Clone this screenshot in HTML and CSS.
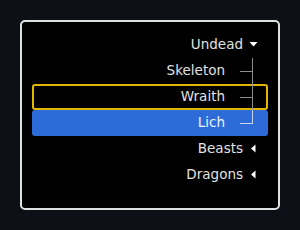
FILE: index.html
```html
<!DOCTYPE html>
<html>
<head>
<meta charset="utf-8">
<link rel="stylesheet" href="styles.css">
</head>
<body>
<div class="panel">
  <div class="tree">
    <div class="row">
      <span class="label">Undead</span>
      <span class="twisty"><svg width="14" height="26" viewBox="0 0 14 26"><polygon points="3.5,10 11.5,10 7.5,14.5" fill="#ffffff"/></svg></span>
    </div>
    <div class="row child">
      <span class="label">Skeleton</span>
      <span class="branch"></span>
    </div>
    <div class="row child focused">
      <span class="label">Wraith</span>
      <span class="branch"></span>
    </div>
    <div class="row child selected last">
      <span class="label">Lich</span>
      <span class="branch"></span>
    </div>
    <div class="row">
      <span class="label">Beasts</span>
      <span class="twisty"><svg width="14" height="26" viewBox="0 0 14 26"><polygon points="5,12.5 9.5,8.5 9.5,16.5" fill="#ffffff"/></svg></span>
    </div>
    <div class="row">
      <span class="label">Dragons</span>
      <span class="twisty"><svg width="14" height="26" viewBox="0 0 14 26"><polygon points="5,12.5 9.5,8.5 9.5,16.5" fill="#ffffff"/></svg></span>
    </div>
  </div>
</div>
</body>
</html>
```
FILE: styles.css
```css
html, body {
  margin: 0;
  padding: 0;
  background: #0d1117;
}

body {
  width: 300px;
  height: 230px;
  padding: 20px;
  box-sizing: border-box;
  font-family: "DejaVu Sans", sans-serif;
  font-size: 13.5px;
}

.panel {
  box-sizing: border-box;
  width: 260px;
  height: 190px;
  border: 2px solid #e0e0e0;
  border-radius: 5px;
  background: #000;
  padding: 10px;
}

.tree {
  display: flex;
  flex-direction: column;
}

.row {
  height: 26px;
  display: flex;
  justify-content: flex-end;
  align-items: center;
  padding-right: 8px;
  border-radius: 3px;
  color: #e2e2e2;
}

.label {
  line-height: 22px;
  margin-bottom: 3px;
}

.twisty {
  width: 14px;
  height: 26px;
  margin-left: 3px;
  display: block;
}

.twisty svg {
  display: block;
}

.branch {
  width: 35px;
  height: 26px;
  background-image: linear-gradient(#8e8e8e, #8e8e8e), linear-gradient(#8e8e8e, #8e8e8e);
  background-repeat: no-repeat;
  background-size: 12px 1px, 1px 100%;
  background-position: 15px 13px, 27px 0;
}

.last .branch {
  background-size: 12px 1px, 1px 14px;
}

.focused {
  box-shadow: inset 0 0 0 2px #e0b600;
}

.selected {
  background: #2d6cd8;
  color: #eef2fb;
}

.selected .branch {
  background-image: linear-gradient(#c9d6f2, #c9d6f2), linear-gradient(#c9d6f2, #c9d6f2);
}
```
